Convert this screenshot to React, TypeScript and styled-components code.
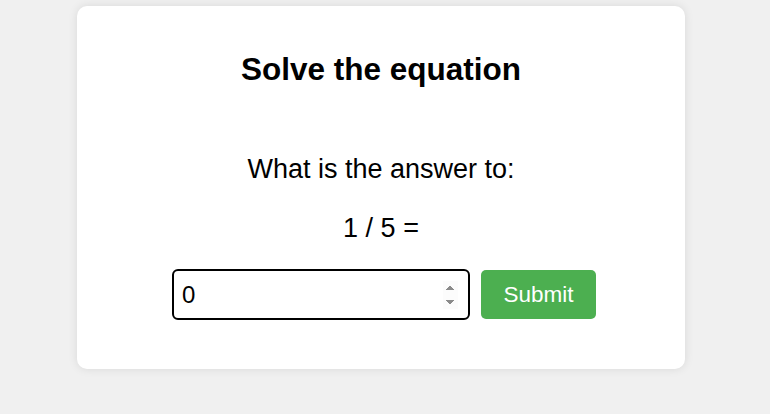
import React, { useState } from "react";
import styled, { createGlobalStyle } from "styled-components";

const GlobalStyle = createGlobalStyle`
  html, body {
    margin: 0;
    padding: 0;
    background: #f0f0f0;
    font-family: "Liberation Sans", Arial, sans-serif;
  }
`;

const Page = styled.div`
  display: flex;
  justify-content: center;
  padding: 6px 8px 45px 0;
  min-height: 414px;
  box-sizing: border-box;
`;

const Card = styled.div`
  width: 608px;
  box-sizing: border-box;
  background: #ffffff;
  border-radius: 10px;
  box-shadow: 0 0 10px rgba(0, 0, 0, 0.1);
  padding: 45px 20px 49px;
  display: flex;
  flex-direction: column;
  align-items: center;
  text-align: center;
  color: #000;
`;

const Title = styled.h1`
  margin: 0 0 66px;
  font-size: 31.5px;
  font-weight: bold;
  line-height: normal;
`;

const Line = styled.p<{ $gap?: number }>`
  margin: 0 0 ${(p) => p.$gap ?? 28}px;
  font-size: 27px;
  line-height: normal;
`;

const AnswerRow = styled.form`
  display: flex;
  align-items: center;
  gap: 11px;
  padding-left: 6px;
`;

const NumberInput = styled.input`
  width: 298px;
  height: 51px;
  box-sizing: border-box;
  border: 2px solid #000;
  border-radius: 6px;
  padding: 10px 10px 10px 8px;
  font-family: "Liberation Sans", Arial, sans-serif;
  font-size: 24px;
  color: #000;
  background: #fff;
  outline: none;

  &::-webkit-inner-spin-button {
    opacity: 1;
    background: #f0f0f0;
  }
`;

const SubmitButton = styled.button`
  width: 115px;
  height: 49px;
  border: none;
  border-radius: 5px;
  background: #4caf50;
  color: #fff;
  font-family: "Liberation Sans", Arial, sans-serif;
  font-size: 22.5px;
  cursor: pointer;
  padding: 0;
`;

export default function App() {
  const [value, setValue] = useState("0");
  return (
    <>
      <GlobalStyle />
      <Page>
        <Card>
          <Title>Solve the equation</Title>
          <Line>What is the answer to:</Line>
          <Line $gap={25}>1 / 5 =</Line>
          <AnswerRow onSubmit={(e) => e.preventDefault()}>
            <NumberInput
              type="number"
              value={value}
              autoFocus
              onChange={(e) => setValue(e.target.value)}
            />
            <SubmitButton type="submit">Submit</SubmitButton>
          </AnswerRow>
        </Card>
      </Page>
    </>
  );
}
